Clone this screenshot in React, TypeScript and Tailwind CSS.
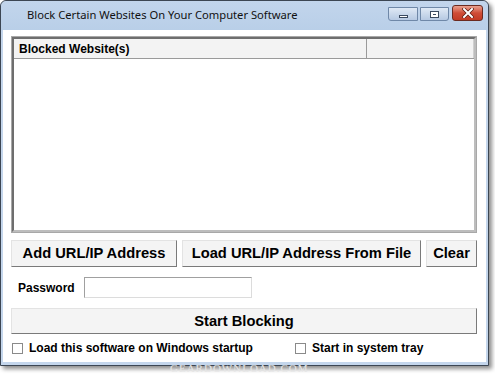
import React from "react";

const ui = { fontFamily: '"Liberation Sans", Arial, sans-serif' };
const title = { fontFamily: '"Noto Sans", "Open Sans", sans-serif' };

function Btn({ children, className = "" }: { children: React.ReactNode; className?: string }) {
  return (
    <div
      className={
        "flex items-center justify-center bg-[#f4f4f4] border border-t-[#e3e3e3] border-l-[#e3e3e3] border-b-[#7a7a7a] border-r-[#7a7a7a] text-[14.7px] font-bold text-black " +
        className
      }
      style={ui}
    >
      {children}
    </div>
  );
}

function Check({ label }: { label: string }) {
  return (
    <div className="flex items-center gap-[6px]">
      <div className="w-[11px] h-[11px] border border-[#8a8a8a] bg-white" />
      <span className="text-[12px] font-bold text-black" style={ui}>
        {label}
      </span>
    </div>
  );
}

export default function App() {
  return (
    <div className="relative w-[495px] h-[374px] bg-white overflow-hidden">
      <div className="w-[489px] h-[366px] flex flex-col border border-[#3c4653] rounded-t-[6px] bg-[#c4d6ec] shadow-[3px_3px_4px_rgba(0,0,0,0.45)]">
        {/* title bar */}
        <div className="h-[29px] shrink-0 flex items-center rounded-t-[6px] bg-gradient-to-b from-[#c2d5ec] to-[#b9cfe8] pl-[26px] pr-[5px]">
          <span className="text-[11.2px] text-[#111] flex-1 leading-none mt-[-1px]" style={title}>
            Block Certain Websites On Your Computer Software
          </span>
          <div className="flex items-start self-start mt-[6px] gap-[2px]">
            <div className="w-[30px] h-[14px] rounded-bl-[3px] border border-[#6f88a8] bg-gradient-to-b from-[#dfe9f5] to-[#b6c9e2] flex items-center justify-center">
              <div className="w-[9px] h-[3px] mt-[5px] border border-[#3a4a60] bg-white" />
            </div>
            <div className="w-[29px] h-[14px] rounded-br-[3px] border border-[#6f88a8] bg-gradient-to-b from-[#dfe9f5] to-[#b6c9e2] flex items-center justify-center">
              <div className="w-[9px] h-[7px] border border-[#3a4a60] bg-white flex items-center justify-center">
                <div className="w-[3px] h-[1px] bg-[#3a4a60]" />
              </div>
            </div>
            <div className="w-[31px] h-[16px] mt-[-2px] ml-[1px] rounded-[3px] border border-[#6b2a20] bg-gradient-to-b from-[#e8a08f] via-[#cf4c36] to-[#c23b24] flex items-center justify-center">
              <svg width="12" height="10" viewBox="0 0 12 10">
                <path d="M2 1 L10 9 M10 1 L2 9" stroke="#5a1a10" strokeWidth="3.4" strokeLinecap="square" />
                <path d="M2 1 L10 9 M10 1 L2 9" stroke="#ffffff" strokeWidth="2" strokeLinecap="square" />
              </svg>
            </div>
          </div>
        </div>
        {/* client */}
        <div className="flex-1 flex flex-col bg-white ml-[2px] mr-[2px] mb-[3px] pl-[8px] pr-[9px] pt-[6px]">
          {/* list */}
          <div className="h-[197px] border border-[#a8a8a8] flex">
            <div className="flex-1 border-2 border-[#6e6e6e] border-r-[#bdbdbd] border-b-[#bdbdbd] flex flex-col bg-white">
              <div className="h-[20px] flex border-b border-[#9a9a9a] bg-[#f3f3f3]">
                <div className="w-[353px] border-r border-[#9a9a9a] flex items-center pl-[5px]">
                  <span className="text-[12px] font-bold text-black" style={ui}>
                    Blocked Website(s)
                  </span>
                </div>
                <div className="flex-1 border-r border-[#d0d0d0]" />
              </div>
            </div>
          </div>
          {/* buttons */}
          <div className="flex gap-[5px] mt-[7px] h-[27px]">
            <Btn className="w-[166px]">Add URL/IP Address</Btn>
            <Btn className="w-[239px]">Load URL/IP Address From File</Btn>
            <Btn className="flex-1">Clear</Btn>
          </div>
          {/* password */}
          <div className="flex items-center mt-[10px] h-[21px] pl-[7px]">
            <span className="text-[12px] font-bold text-black w-[66px]" style={ui}>
              Password
            </span>
            <div className="w-[168px] h-[21px] border border-[#a0a0a0] border-r-[#dcdcdc] border-b-[#dcdcdc] bg-white" />
          </div>
          {/* start */}
          <Btn className="mt-[10px] h-[26px]">Start Blocking</Btn>
          {/* checks */}
          <div className="flex items-center mt-[5px] pl-[1px]">
            <div className="w-[283px]">
              <Check label="Load this software on Windows startup" />
            </div>
            <Check label="Start in system tray" />
          </div>
        </div>
      </div>
      <div
        className="absolute left-[170px] top-[362px] text-[11px] leading-[12px] tracking-[1px] text-[#e6e6e6]"
        style={{ fontFamily: '"Liberation Serif", serif' }}
      >
        GEARDOWNLOAD.COM
      </div>
    </div>
  );
}
